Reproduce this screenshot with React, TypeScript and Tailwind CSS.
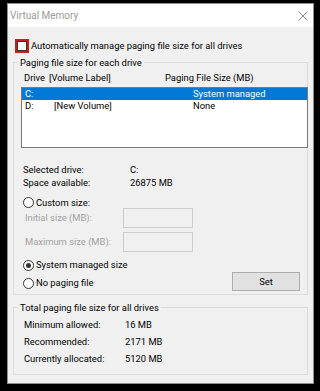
import React from "react";

function Radio({ checked }: { checked?: boolean }) {
  return (
    <span className="w-[11px] h-[11px] rounded-full border border-[#333] bg-white flex items-center justify-center shrink-0">
      {checked && <span className="w-[5px] h-[5px] rounded-full bg-[#333]" />}
    </span>
  );
}

export default function App() {
  return (
    <div
      className="w-[320px] h-[391px] bg-black pt-[3px] pl-[7px] text-[9.4px] leading-none text-black"
      style={{ fontFamily: "Roboto, 'Liberation Sans', sans-serif" }}
    >
      <div className="w-[307px] h-[381px] border border-[#8f8f8f] bg-[#f0f0f0] flex flex-col">
        <div className="h-[23px] bg-white flex items-center justify-between pl-[2px] pr-[5px]">
          <span className="text-[10px] text-[#9a9a9a]">Virtual Memory</span>
          <svg width="10" height="10" viewBox="0 0 10 10" className="mt-[1px]">
            <path d="M0.5 0.5 L9.5 9.5 M9.5 0.5 L0.5 9.5" stroke="#8a8a8a" strokeWidth="1" />
          </svg>
        </div>
        <div className="flex flex-col px-[5px]">
          <div className="mt-[12px] flex items-center h-[14px]">
            <span className="ml-[2px] w-[14px] h-[14px] border-2 border-[#d11a1a] flex items-center justify-center">
              <span className="w-[10px] h-[10px] border border-[#333] bg-white" />
            </span>
            <span className="ml-[2px]">Automatically manage paging file size for all drives</span>
          </div>

          <fieldset className="mt-[4px] border border-[#dcdcdc] pb-[3px]">
            <legend className="ml-[4px] px-[2px] leading-[11px]">Paging file size for each drive</legend>
            <div className="flex flex-col pl-[7px]">
              <div className="mt-[4px] flex h-[11px] items-center">
                <span className="ml-[3px] w-[25px]">Drive</span>
                <span className="w-[116px]">[Volume Label]</span>
                <span>Paging File Size (MB)</span>
              </div>
              <div className="mt-[4px] h-[61px] border border-[#7a7a7a] bg-white mr-[-1px]">
                <div className="h-[12px] bg-[#0078d7] text-white flex items-center">
                  <span className="ml-[3px] w-[168px]">C:</span>
                  <span>System managed</span>
                </div>
                <div className="h-[12px] flex items-center">
                  <span className="ml-[3px] w-[29px]">D:</span>
                  <span className="w-[139px]">[New Volume]</span>
                  <span>None</span>
                </div>
              </div>

              <div className="mt-[16px] flex h-[11px] items-center">
                <span className="ml-[2px] w-[107px]">Selected drive:</span>
                <span>C:</span>
              </div>
              <div className="mt-[2px] flex h-[11px] items-center">
                <span className="ml-[2px] w-[107px]">Space available:</span>
                <span>26875 MB</span>
              </div>

              <div className="mt-[9px] flex h-[11px] items-center">
                <span className="ml-[2px]"><Radio /></span>
                <span className="ml-[2px]">Custom size:</span>
              </div>
              <div className="flex h-[20px] items-center">
                <span className="ml-[4px] w-[98px] text-[#a0a0a0]">Initial size (MB):</span>
                <span className="w-[70px] h-[20px] border border-[#cccccc] bg-[#f0f0f0]" />
              </div>
              <div className="mt-[4px] flex h-[20px] items-center">
                <span className="ml-[4px] w-[98px] text-[#a0a0a0]">Maximum size (MB):</span>
                <span className="w-[70px] h-[20px] border border-[#cccccc] bg-[#f0f0f0]" />
              </div>

              <div className="mt-[7px] flex h-[12px] items-center">
                <span className="ml-[2px]"><Radio checked /></span>
                <span className="ml-[2px]">System managed size</span>
              </div>
              <div className="mt-[1px] flex items-start">
                <div className="mt-[5px] flex h-[12px] items-center">
                  <span className="ml-[2px]"><Radio /></span>
                  <span className="ml-[2px]">No paging file</span>
                </div>
                <div className="ml-auto mr-[7px] w-[68px] h-[19px] border border-[#adadad] bg-[#e1e1e1] flex items-center justify-center">
                  Set
                </div>
              </div>
            </div>
          </fieldset>

          <fieldset className="mt-[7px] border border-[#dcdcdc] pb-[10px]">
            <legend className="ml-[4px] px-[2px] leading-[11px]">Total paging file size for all drives</legend>
            <div className="flex flex-col pl-[10px]">
              <div className="mt-[6px] flex h-[11px] items-center">
                <span className="w-[101px]">Minimum allowed:</span>
                <span>16 MB</span>
              </div>
              <div className="mt-[6px] flex h-[11px] items-center">
                <span className="w-[101px]">Recommended:</span>
                <span>2171 MB</span>
              </div>
              <div className="mt-[6px] flex h-[11px] items-center">
                <span className="w-[101px]">Currently allocated:</span>
                <span>5120 MB</span>
              </div>
            </div>
          </fieldset>
        </div>
      </div>
    </div>
  );
}
